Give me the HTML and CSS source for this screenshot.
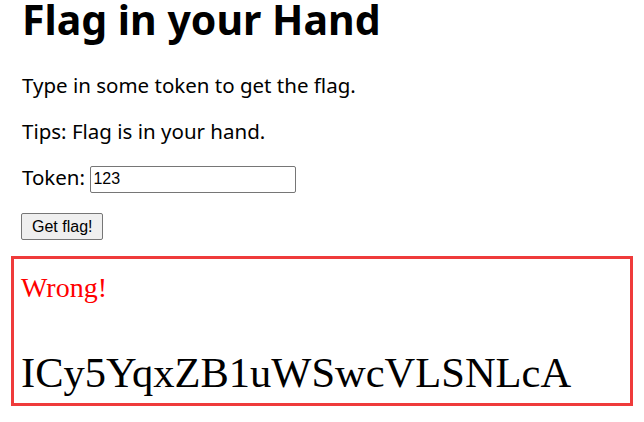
FILE: index.html
```html
<!DOCTYPE html>
<html>
<head>
<meta charset="utf-8">
<link rel="stylesheet" href="styles.css">
</head>
<body>
<div class="page">
  <div class="intro">
    <h1 class="title">Flag in your Hand</h1>
    <p class="line">Type in some token to get the flag.</p>
    <p class="line">Tips: Flag is in your hand.</p>
    <form class="form">
      <p class="line tokenline">Token: <input class="token" type="text" value="123"></p>
      <p class="btnline"><button class="btn" type="button">Get flag!</button></p>
    </form>
  </div>
  <div class="result">
    <p class="wrong">Wrong!</p>
    <p class="flag">ICy5YqxZB1uWSwcVLSNLcA</p>
  </div>
</div>
</body>
</html>
```

FILE: styles.css
```css
html, body {
  margin: 0;
  padding: 0;
  background: #fff;
}
.page {
  padding: 0 11px;
  font-family: "Noto Sans", sans-serif;
  font-size: 20.5px;
  color: #000;
}
.intro {
  padding-left: 11px;
}
.title {
  font-family: "Noto Sans", sans-serif;
  font-size: 41px;
  font-weight: bold;
  line-height: 38px;
  margin: 0 0 34px 0;
}
.line {
  margin: 0 0 19px 0;
  line-height: 27px;
}
.tokenline {
  margin-bottom: 17px;
}
.form { margin: 0; }
.token {
  font-family: "Liberation Sans", Arial, sans-serif;
  font-size: 16px;
  width: 200px;
  height: 23px;
  padding: 1px 2px;
  border: 1px solid #767676;
  border-radius: 2px;
  vertical-align: 1px;
}
.btnline {
  margin: 0 0 16px -1px;
}
.btn {
  font-family: "Liberation Sans", Arial, sans-serif;
  font-size: 16px;
  height: 27px;
  padding: 0 10px;
  background: #efefef;
  border: 1px solid #767676;
  border-radius: 2px;
  color: #000;
}
.result {
  border: 3px solid #ef3b3b;
  padding: 0 7px;
  height: 144px;
  font-family: "Liberation Serif", serif;
}
.wrong {
  color: #f00;
  font-size: 28px;
  margin: 12px 0 0 0;
  line-height: 34px;
}
.flag {
  font-size: 42.5px;
  margin: 45px 0 0 0;
  line-height: 46px;
}
```
